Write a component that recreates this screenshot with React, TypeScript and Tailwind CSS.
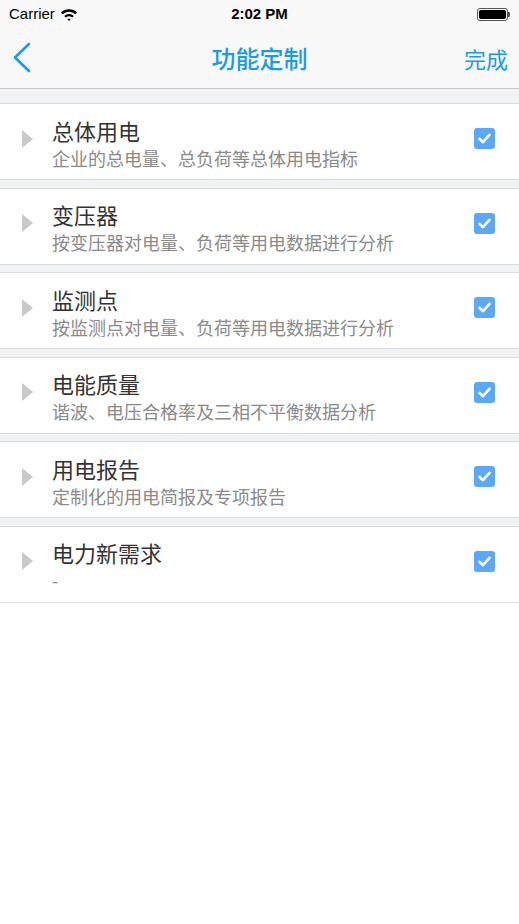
type Feature = { title: string; desc: string };

const FEATURES: Feature[] = [
  { title: "总体用电", desc: "企业的总电量、总负荷等总体用电指标" },
  { title: "变压器", desc: "按变压器对电量、负荷等用电数据进行分析" },
  { title: "监测点", desc: "按监测点对电量、负荷等用电数据进行分析" },
  { title: "电能质量", desc: "谐波、电压合格率及三相不平衡数据分析" },
  { title: "用电报告", desc: "定制化的用电简报及专项报告" },
  { title: "电力新需求", desc: "-" },
];

const cjk = { fontFamily: "'Noto Sans CJK SC', 'Noto Sans', sans-serif" };

const StatusBar = () => (
  <div
    className="h-[28px] flex items-center justify-between px-[9px] text-[15px] text-black relative"
    style={{ fontFamily: "'Liberation Sans', Arial, sans-serif" }}
  >
    <div className="flex items-center gap-[5px]">
      <span>Carrier</span>
      <svg width="18" height="13" viewBox="0 0 18 13">
        <path d="M1 4.6 A11.5 11.5 0 0 1 17 4.6 L15.4 6.3 A9.2 9.2 0 0 0 2.6 6.3 Z" fill="#000" />
        <path d="M4.2 7.9 A7 7 0 0 1 13.8 7.9 L12.2 9.6 A4.8 4.8 0 0 0 5.8 9.6 Z" fill="#000" />
        <path d="M7.4 11.2 A2.4 2.4 0 0 1 10.6 11.2 L9 12.9 Z" fill="#000" />
      </svg>
    </div>
    <span className="absolute left-1/2 -translate-x-1/2 font-bold">2:02 PM</span>
    <div className="flex items-center">
      <div className="w-[31px] h-[13px] rounded-[3px] border border-[#555] p-[1px]">
        <div className="w-full h-full rounded-[2px] bg-black" />
      </div>
      <div className="w-[2px] h-[5px] bg-[#555] rounded-r-[1px]" />
    </div>
  </div>
);

const CheckBox = () => (
  <div className="w-[21px] h-[21px] rounded-[3px] bg-[#5aa8f7] flex items-center justify-center">
    <svg width="13" height="11" viewBox="0 0 13 11">
      <path d="M1.5 5.8 L5 9.2 L11.5 1.8" fill="none" stroke="#fff" strokeWidth="2.6" strokeLinecap="round" strokeLinejoin="round" />
    </svg>
  </div>
);

const FeatureRow = ({ item }: { item: Feature }) => (
  <div className="h-[77px] bg-white border-y border-[#dcdde0] flex items-center pl-[22px] pr-[24px]">
    <svg width="11" height="18" viewBox="0 0 11 18" className="shrink-0 -mt-[6px]">
      <path d="M0 0 L11 9 L0 18 Z" fill="#c9c9c9" />
    </svg>
    <div className="flex-1 min-w-0 ml-[19px] mt-[2px]" style={cjk}>
      <div className="text-[22px] leading-[28px] text-[#333]">{item.title}</div>
      <div className="text-[18px] leading-[24px] text-[#8a8a8a] mt-[2px]">{item.desc}</div>
    </div>
    <div className="shrink-0 -mt-[6px]">
      <CheckBox />
    </div>
  </div>
);

export default function App() {
  return (
    <div className="w-[519px] h-[924px] bg-white overflow-hidden">
      <div className="bg-[#f8f8f8] border-b border-[#c6c6ca]">
        <StatusBar />
        <div className="h-[60px] flex items-center justify-between relative" style={cjk}>
          <svg width="20" height="32" viewBox="0 0 20 32" className="ml-[13px]">
            <path d="M16 2 L2 15.5 L16 29" fill="none" stroke="#1b9be6" strokeWidth="2.6" strokeLinecap="round" strokeLinejoin="round" />
          </svg>
          <span className="absolute left-1/2 -translate-x-1/2 text-[24px] font-medium text-[#1b9be6]">功能定制</span>
          <span className="mr-[11px] text-[22px] text-[#1b9be6]">完成</span>
        </div>
      </div>
      <div className="bg-[#f1f2f4] pt-[14px] flex flex-col gap-[7.5px]">
        {FEATURES.map((f) => (
          <FeatureRow key={f.title} item={f} />
        ))}
      </div>
    </div>
  );
}
